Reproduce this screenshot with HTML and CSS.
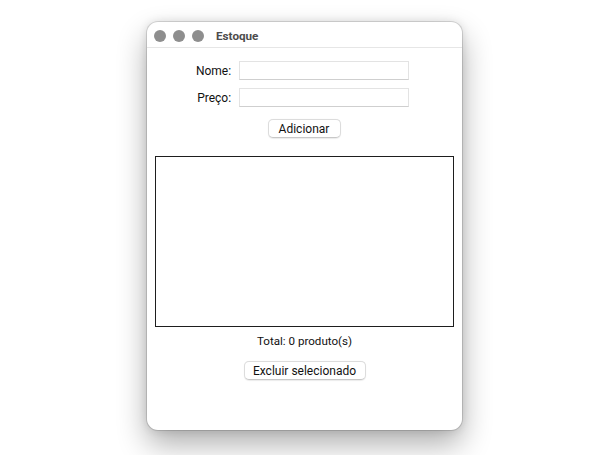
FILE: index.html
```html
<!DOCTYPE html>
<html lang="pt">
<head>
<meta charset="utf-8">
<title>Estoque</title>
<link rel="stylesheet" href="styles.css">
</head>
<body>
<div class="window">
  <div class="titlebar">
    <div class="lights">
      <span class="light"></span>
      <span class="light"></span>
      <span class="light"></span>
    </div>
    <div class="title">Estoque</div>
  </div>
  <div class="content">
    <div class="form">
      <label class="label">Nome:</label>
      <div class="entry"></div>
      <label class="label">Preço:</label>
      <div class="entry"></div>
    </div>
    <button class="btn btn-add">Adicionar</button>
    <div class="listbox"></div>
    <div class="total">Total: 0 produto(s)</div>
    <button class="btn btn-del">Excluir selecionado</button>
  </div>
</div>
</body>
</html>
```

FILE: styles.css
```css
html, body {
  margin: 0;
  padding: 0;
  background: #ffffff;
}
body {
  width: 612px;
  height: 455px;
  overflow: hidden;
  padding: 22px 0 0 147px;
  box-sizing: border-box;
  font-family: Roboto, "Liberation Sans", sans-serif;
  color: #111111;
}
.window {
  width: 315px;
  height: 408px;
  background: #ffffff;
  border-radius: 11px;
  box-shadow: 0 0 0 1px rgba(0,0,0,0.12), 0 14px 30px rgba(0,0,0,0.32), 0 0 10px rgba(0,0,0,0.12);
  overflow: hidden;
}
.titlebar {
  height: 26px;
  border-bottom: 1px solid #e6e6e6;
  display: flex;
  align-items: center;
  box-sizing: border-box;
  padding-left: 7px;
  padding-top: 2px;
}
.lights {
  display: flex;
  gap: 7px;
}
.light {
  width: 12px;
  height: 12px;
  border-radius: 50%;
  background: #8e8e8e;
}
.title {
  margin-left: 12px;
  font-size: 11.7px;
  font-weight: 700;
  color: #4c4c4c;
}
.content {
  display: flex;
  flex-direction: column;
  align-items: center;
  padding-top: 13px;
}
.form {
  display: grid;
  grid-template-columns: auto 170px;
  column-gap: 8px;
  row-gap: 8px;
  align-items: center;
  margin-left: -4px;
}
.label {
  justify-self: end;
  font-size: 12px;
}
.entry {
  height: 19px;
  box-sizing: border-box;
  border: 1px solid #e3e3e3;
  border-bottom-color: #cfcfcf;
  background: #fff;
}
.btn {
  font-family: inherit;
  font-size: 12px;
  color: #111111;
  background: #fff;
  border: 1px solid #dcdcdc;
  border-bottom-color: #c8c8c8;
  border-radius: 5px;
  height: 19px;
  padding: 0;
  box-shadow: 0 0.5px 1px rgba(0,0,0,0.08);
}
.btn-add {
  margin-top: 12px;
  width: 73px;
  margin-left: -1px;
}
.listbox {
  margin-top: 18px;
  width: 299px;
  height: 171px;
  box-sizing: border-box;
  border: 1px solid #1e1e1e;
  margin-left: -1px;
}
.total {
  margin-top: 7px;
  font-size: 11.6px;
  height: 15px;
  line-height: 15px;
}
.btn-del {
  margin-top: 12px;
  width: 122px;
}
```
